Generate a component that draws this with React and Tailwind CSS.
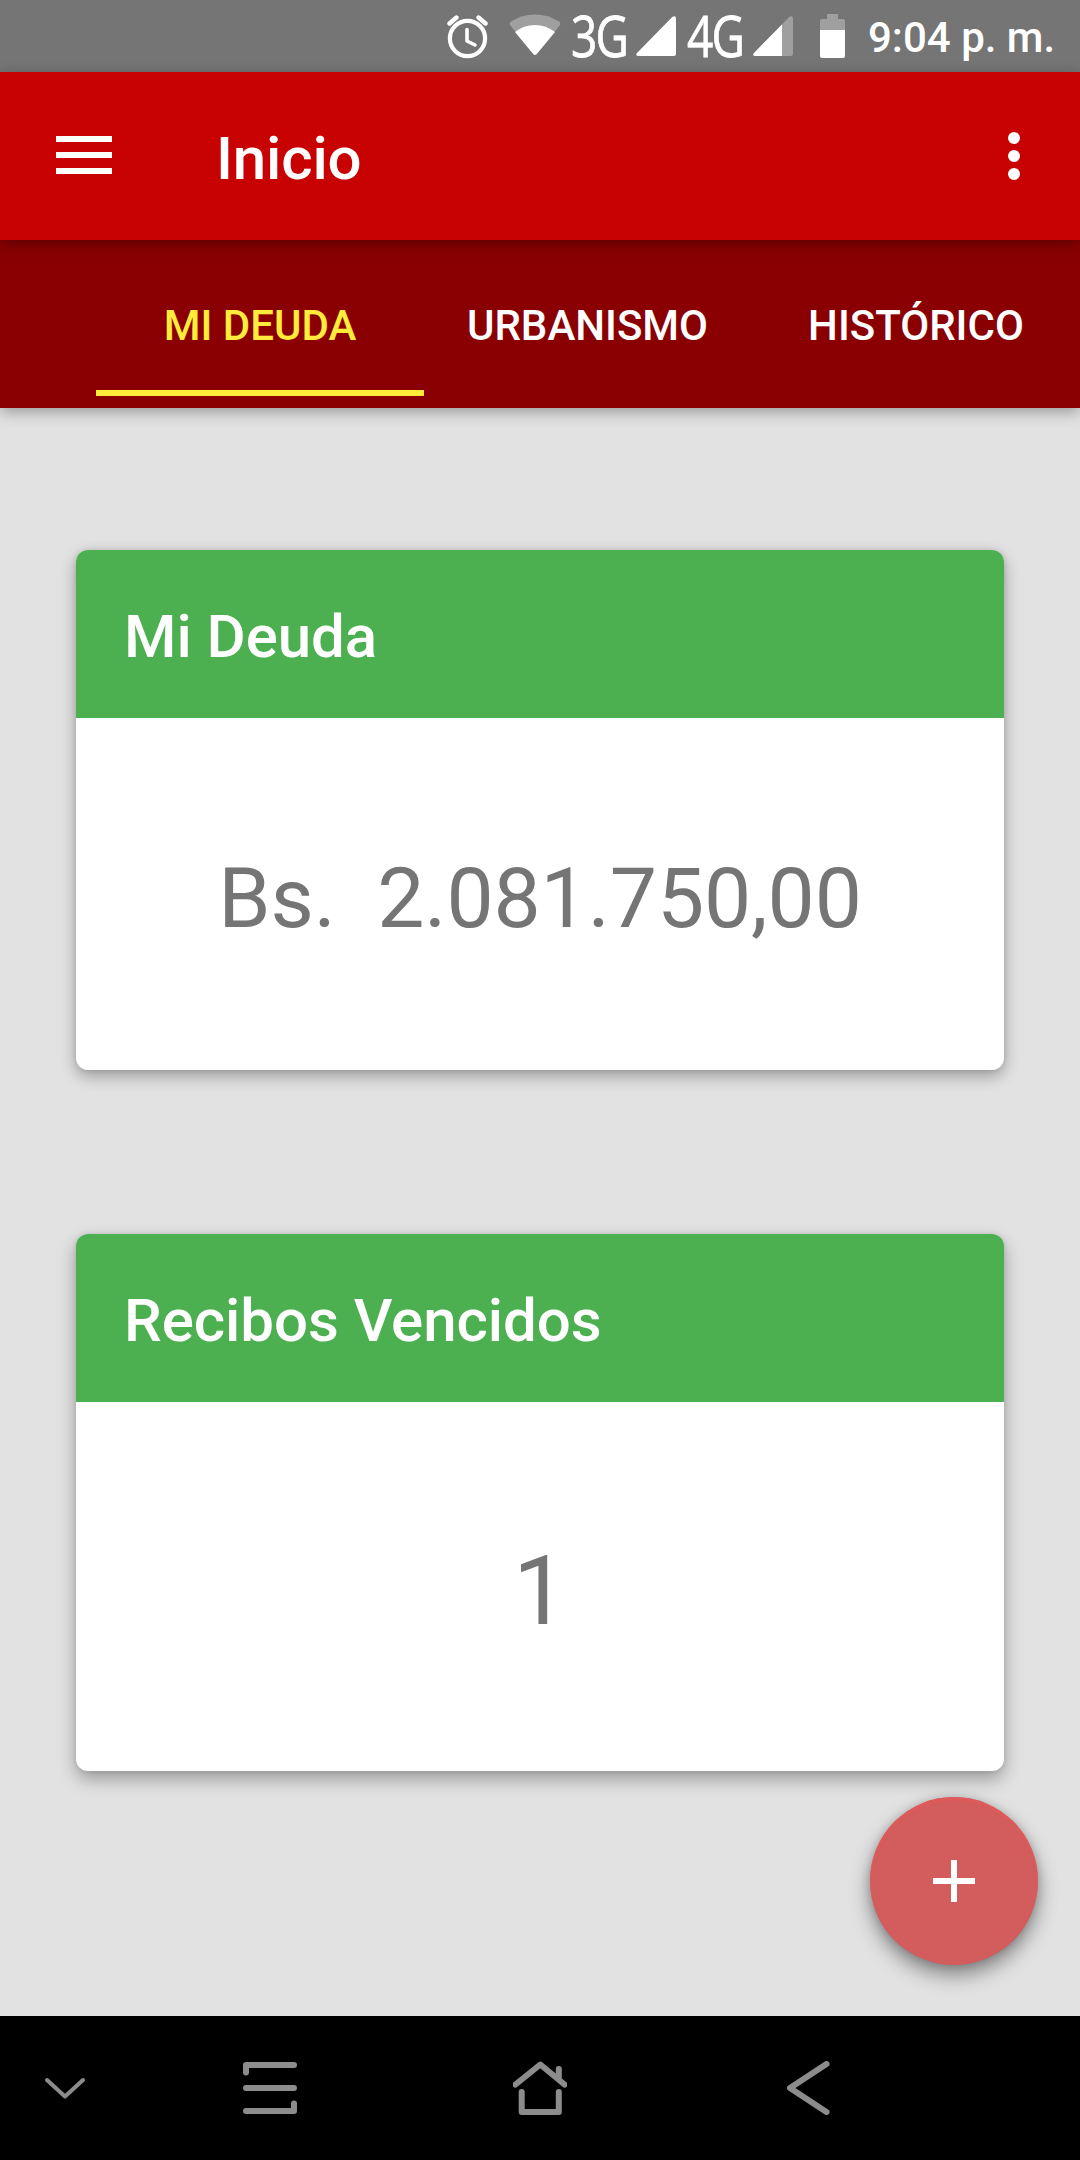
const FONT = "font-[Roboto,'Liberation_Sans',sans-serif]";

const TABS = [
  { label: 'MI DEUDA',  width: 'w-[328px]', active: true },
  { label: 'URBANISMO', width: 'w-[327px]' },
  { label: 'HISTÓRICO', width: 'w-[330px]' },
];

function AlarmIcon() {
  return (
    <svg className="w-[42px] h-[44px]" viewBox="0 0 42 44" fill="none" stroke="#fff">
      <circle cx="20.5" cy="23.5" r="17.6" strokeWidth="4.2" />
      <path d="M2.5 8.5L9.5 2.5M38.5 8.5L31.5 2.5" strokeWidth="4.4" strokeLinecap="round" />
      <path d="M20 14.5V26L28 30" strokeWidth="3.6" strokeLinecap="round" strokeLinejoin="round" />
    </svg>
  );
}

function WifiIcon() {
  return (
    <svg className="w-[52px] h-[42px]" viewBox="0 0 52 42">
      <path d="M1.4 11.5Q-.4 9.2 2 7.6Q13 .5 26 .5T50 7.6Q52.2 9.2 50.6 11.5L45 18.5H7Z" fill="#9f9f9f" />
      <path d="M6 18Q15 11 26 11T46 18L27.8 40Q26 42 24.2 40Z" fill="#fff" />
    </svg>
  );
}

function SignalIcon({ weak }) {
  return (
    <svg className="w-[40px] h-[40px]" viewBox="0 0 40 40">
      <path d="M1 37L36.5 .8Q40 -.8 40 2.5V37.5Q40 40 37.5 40H2Q-1 39.5 1 37Z" fill={weak ? '#9f9f9f' : '#fff'} />
      {weak && <path d="M1 37L29 8.5V40H2Q-1 39.5 1 37Z" fill="#fff" />}
    </svg>
  );
}

function BatteryIcon() {
  return (
    <svg className="w-[25px] h-[44px]" viewBox="0 0 25 44">
      <path d="M7 0H18V5H23Q25 5 25 7V16H0V7Q0 5 2 5H7Z" fill="#9f9f9f" />
      <path d="M0 16H25V42Q25 44 23 44H2Q0 44 0 42Z" fill="#fff" />
    </svg>
  );
}

function NetworkLabel({ children }) {
  return (
    <span className="w-[57px] whitespace-nowrap font-['Open_Sans','Noto_Sans',sans-serif] text-[56px] leading-[70px] tracking-[-2px] [-webkit-text-stroke:0.8px_white]">
      <span className="inline-block origin-left scale-x-[0.82]">{children}</span>
    </span>
  );
}

function StatusBar() {
  return (
    <div className="flex h-[72px] shrink-0 items-start bg-[#757575] pl-[447px] text-white">
      <div className="mt-[15px]"><AlarmIcon /></div>
      <div className="mt-[14px] ml-[20px] mr-[10px]"><WifiIcon /></div>
      <NetworkLabel>3G</NetworkLabel>
      <div className="mt-[16px] ml-[8px] mr-[11px]"><SignalIcon /></div>
      <NetworkLabel>4G</NetworkLabel>
      <div className="mt-[16px] ml-[9px]"><SignalIcon weak /></div>
      <div className="mt-[14px] ml-[27px]"><BatteryIcon /></div>
      <span className="ml-[23px] whitespace-nowrap text-[42px] font-medium leading-[75px]">9:04 p. m.</span>
    </div>
  );
}

function AppBar() {
  return (
    <header className="relative z-20 flex h-[168px] shrink-0 items-center bg-[#c80202] pl-[56px] pr-[60px] text-white shadow-[0_4px_14px_rgba(0,0,0,0.32)]">
      <button className="mb-[2px] flex w-[56px] flex-col gap-[10px]" aria-label="Abrir menú">
        <span className="h-[6px] w-full bg-white" />
        <span className="h-[6px] w-full bg-white" />
        <span className="h-[6px] w-full bg-white" />
      </button>
      <h1 className="ml-[104px] pt-[6px] text-[60px] font-medium leading-none tracking-[-0.15px]">Inicio</h1>
      <button className="ml-auto flex flex-col gap-[6px]" aria-label="Más opciones">
        <span className="size-[12px] rounded-full bg-white" />
        <span className="size-[12px] rounded-full bg-white" />
        <span className="size-[12px] rounded-full bg-white" />
      </button>
    </header>
  );
}

function TabBar() {
  return (
    <nav className="relative z-10 flex h-[168px] shrink-0 bg-[#8a0002] pb-[12px] pl-[96px] shadow-[0_4px_14px_rgba(0,0,0,0.32)]">
      {TABS.map((tab) => (
        <div
          key={tab.label}
          className={`${tab.width} flex shrink-0 flex-col items-center whitespace-nowrap pt-[61px] text-[42px] font-medium leading-[50px] ${tab.active ? 'text-[#ffeb3b]' : 'text-white'}`}
        >
          {tab.label}
          {tab.active && <span className="mt-auto h-[6px] w-full bg-[#ffeb3b]" />}
        </div>
      ))}
    </nav>
  );
}

function Card({ title, className, children }) {
  return (
    <section className={`${className} flex flex-col overflow-hidden rounded-[12px] bg-white`}>
      <h2 className="flex h-[168px] shrink-0 items-center bg-[#4caf50] pl-[48px] pt-[6px] text-[60px] font-medium leading-none tracking-[-0.05px] text-white">
        {title}
      </h2>
      <div className="flex flex-1 items-center justify-center whitespace-pre text-[#757575]">{children}</div>
    </section>
  );
}

function NavBar() {
  return (
    <footer className="flex h-[144px] shrink-0 items-center bg-black pl-[44px] text-[#8c8c8c]">
      <svg className="w-[42px] h-[22px]" viewBox="0 0 42 22" fill="none" stroke="currentColor" strokeWidth="4" strokeLinecap="round" strokeLinejoin="round">
        <path d="M3 3L21 19.5L39 3" />
      </svg>
      <svg className="ml-[157px] w-[54px] h-[54px]" viewBox="0 0 54 54" fill="none" stroke="currentColor" strokeWidth="6" strokeLinecap="round" strokeLinejoin="round">
        <path d="M3 11.5V4H51M3 27H51M3 50H51V42.5" />
      </svg>
      <svg className="ml-[216px] w-[54px] h-[54px]" viewBox="0 0 54 54" fill="none" stroke="currentColor" strokeWidth="6" strokeLinecap="round" strokeLinejoin="round">
        <path d="M2.5 23.5L27.3 3.5L51.5 23.5M45.8 8V18M8.7 31V51H45.8V31" />
      </svg>
      <svg className="ml-[219px] w-[44px] h-[54px]" viewBox="0 0 44 54" fill="none" stroke="currentColor" strokeWidth="6" strokeLinecap="round" strokeLinejoin="round">
        <path d="M40.5 3L4 27L40.5 51" />
      </svg>
    </footer>
  );
}

export default function App() {
  return (
    <div className={`${FONT} flex h-[2160px] w-[1080px] flex-col overflow-hidden bg-[#e2e2e2]`}>
      <StatusBar />
      <AppBar />
      <TabBar />

      <main className="relative flex-1 px-[76px] pt-[142px]">
        <Card title="Mi Deuda" className="h-[520px] shadow-[0_6px_16px_rgba(0,0,0,0.32),0_0_5px_rgba(0,0,0,0.1)]">
          <span className="pt-[10px] text-[84px] leading-none tracking-[-0.1px]">{'Bs.  2.081.750,00'}</span>
        </Card>
        <Card title="Recibos Vencidos" className="mt-[164px] h-[537px] shadow-[0_8px_18px_rgba(0,0,0,0.32),0_0_5px_rgba(0,0,0,0.1)]">
          <span className="pt-[8px] text-[96px] leading-none">1</span>
        </Card>

        <button
          className="absolute right-[42px] bottom-[51px] flex size-[168px] items-center justify-center rounded-full bg-[#d35c5c] shadow-[0_10px_20px_rgba(0,0,0,0.42),0_0_8px_rgba(0,0,0,0.15),inset_0_3px_3px_#e15a5a]"
          aria-label="Agregar"
        >
          <svg className="size-[42px]" viewBox="0 0 42 42" fill="#fff">
            <path d="M18 0h6v18h18v6H24v18h-6V24H0v-6h18z" />
          </svg>
        </button>
      </main>

      <NavBar />
    </div>
  );
}
